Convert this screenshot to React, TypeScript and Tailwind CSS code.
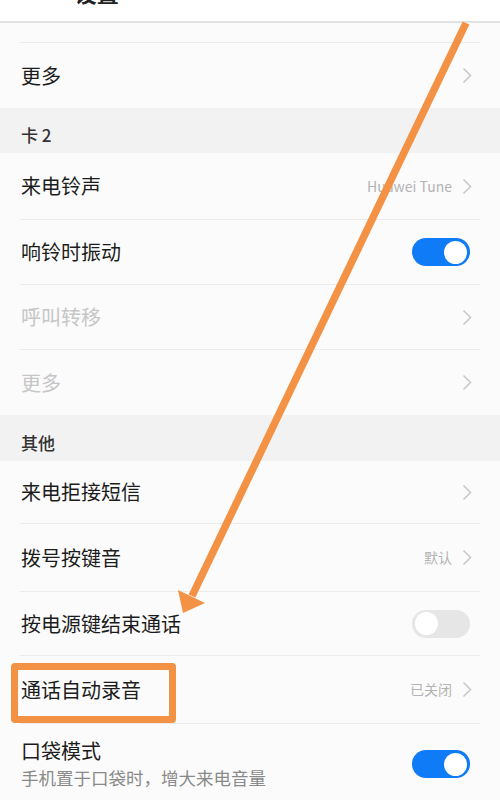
import React from 'react';

const font = { fontFamily: '"Noto Sans CJK SC", "Noto Sans", sans-serif' };

function Chevron() {
  return (
    <svg width="10" height="17" viewBox="0 0 10 17" className="shrink-0">
      <path d="M1.5 1.5 L8.5 8.5 L1.5 15.5" fill="none" stroke="#c9c9c9" strokeWidth="1.6" />
    </svg>
  );
}

function Toggle({ on }: { on: boolean }) {
  return (
    <div
      className={`w-[58px] h-[28px] rounded-full flex items-center px-[3px] ${
        on ? 'bg-[#0f7bf6] justify-end' : 'bg-[#e6e6e6] justify-start'
      }`}
    >
      <div className="w-[23px] h-[23px] rounded-full bg-white" />
    </div>
  );
}

function Row({
  title,
  value,
  toggle,
  disabled,
  divider = true,
  h = 'h-[65px]',
}: {
  title: string;
  value?: string;
  toggle?: boolean;
  disabled?: boolean;
  divider?: boolean;
  h?: string;
}) {
  return (
    <div className={`${h} mx-[20px] pl-[1px] pr-[8px] flex items-center ${divider ? 'border-b border-[#ebebeb]' : ''}`}>
      <span className={`flex-1 text-[20px] ${disabled ? 'text-[#c6c6c6]' : 'text-[#1c1c1c]'}`}>{title}</span>
      {toggle === undefined ? (
        <div className="flex items-center gap-[10px]">
          {value && <span className="text-[14px] text-[#b3b3b3]">{value}</span>}
          <Chevron />
        </div>
      ) : (
        <div className="mr-[2px]">
          <Toggle on={toggle} />
        </div>
      )}
    </div>
  );
}

function Section({ title, h = 'h-[45px]' }: { title: string; h?: string }) {
  return (
    <div className={`${h} bg-[#f2f2f2] pl-[21px] flex items-end pb-[6px]`}>
      <span className="text-[17px] text-[#333] font-medium">{title}</span>
    </div>
  );
}

export default function App() {
  return (
    <div className="relative w-[500px] h-[800px] overflow-hidden bg-[#fbfbfb]" style={font}>
      {/* Header (mostly scrolled off) */}
      <div className="h-[23px] bg-white border-b-2 border-[#e2e2e2] overflow-hidden">
        <div className="flex items-center gap-[38px] pl-[30px] -mt-[19px]">
          <span className="text-[22px] text-[#1f7cf0] leading-none">‹</span>
          <span className="text-[22px] font-bold text-[#222] leading-none">设置</span>
        </div>
      </div>

      <div className="h-[20px] mx-[20px] border-b border-[#ebebeb]" />
      <Row title="更多" divider={false} h="h-[65px]" />
      <Section title="卡 2" />
      <Row title="来电铃声" value="Huawei Tune" h="h-[67px]" />
      <Row title="响铃时振动" toggle={true} />
      <Row title="呼叫转移" disabled />
      <Row title="更多" disabled divider={false} />
      <Section title="其他" h="h-[46px]" />
      <Row title="来电拒接短信" h="h-[63px]" />
      <Row title="拨号按键音" value="默认" h="h-[68px]" />
      <Row title="按电源键结束通话" toggle={false} h="h-[64px]" />
      <Row title="通话自动录音" value="已关闭" h="h-[68px]" />
      <div className="h-[80px] pl-[21px] pr-[30px] flex items-center">
        <div className="flex-1 flex flex-col">
          <span className="text-[20px] text-[#1c1c1c] leading-[28px]">口袋模式</span>
          <span className="text-[17.5px] text-[#8a8a8a] leading-[26px]">手机置于口袋时，增大来电音量</span>
        </div>
        <Toggle on={true} />
      </div>

      {/* Annotation overlay: orange arrow and highlight box */}
      <svg className="absolute inset-0 pointer-events-none" width="500" height="800" viewBox="0 0 500 800">
        <line x1="466" y1="23" x2="192" y2="596" stroke="#f39245" strokeWidth="7.5" />
        <polygon points="183,613 178,590 205,603" fill="#f39245" />
      </svg>
      <div className="absolute left-[11px] top-[663px] w-[165px] h-[60px] border-[7px] border-[#f39245] rounded-[4px] pointer-events-none" />
    </div>
  );
}
